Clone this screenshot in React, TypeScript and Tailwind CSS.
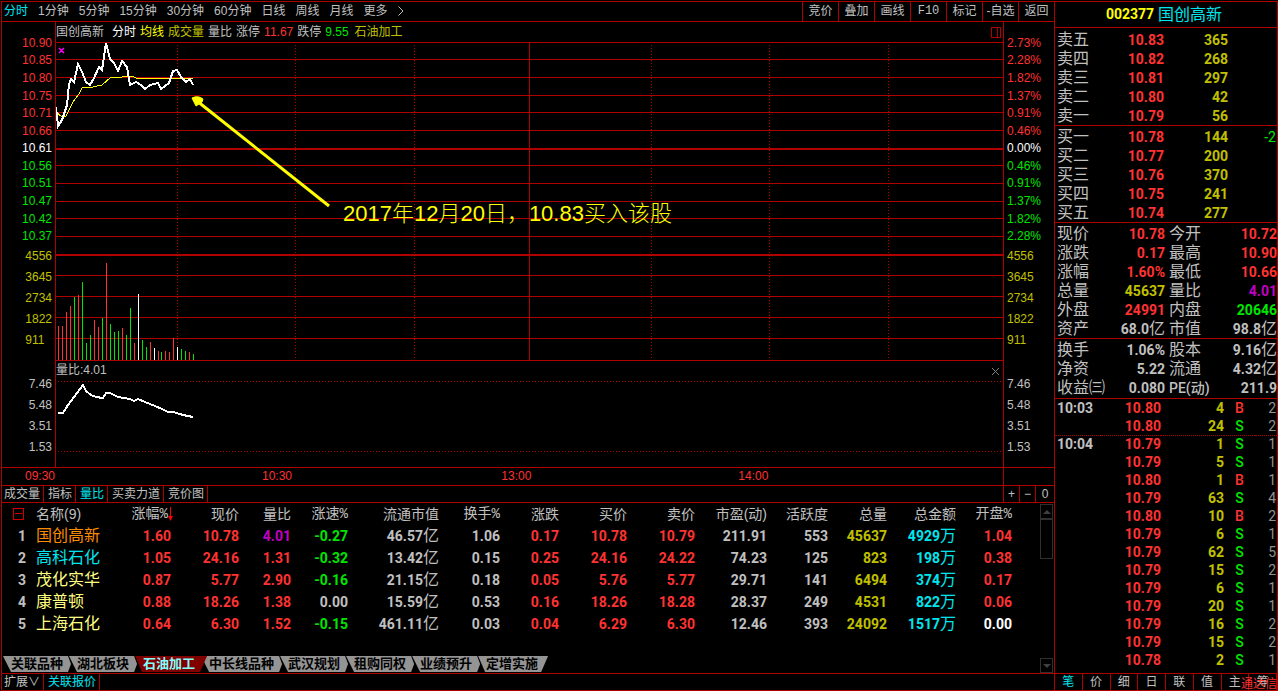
import clsx from 'clsx';

const RED = 'text-[#ff3232]';
const GREEN = 'text-[#00e600]';
const YELLOW = 'text-[#c0c000]';
const GRAY = 'text-[#c0c0c0]';
const CYAN = 'text-[#00e6f0]';
const MAGENTA = 'text-[#c000c0]';
const LINE = 'border-[#b00000]';

const UI = "font-['Liberation_Sans','Noto_Sans_CJK_SC',sans-serif]";
const NUM = "font-[Roboto,'Noto_Sans_CJK_SC',sans-serif] font-bold";
const HEAD = "font-['Liberation_Mono','Noto_Sans_CJK_SC',monospace]";
const CJK = "font-[Roboto,'Noto_Sans_CJK_SC',sans-serif] font-normal text-[16px]";

const periods = ['分时', '1分钟', '5分钟', '15分钟', '30分钟', '60分钟', '日线', '周线', '月线', '更多'];
const tools = ['竞价', '叠加', '画线', 'F10', '标记', '-自选', '返回'];

const priceAxis = ['10.90', '10.85', '10.80', '10.75', '10.71', '10.66', '10.61', '10.56', '10.51', '10.47', '10.42', '10.37'];
const percentAxis = ['2.73%', '2.28%', '1.82%', '1.37%', '0.91%', '0.46%', '0.00%', '0.46%', '0.91%', '1.37%', '1.82%', '2.28%'];
const volumeAxis = ['4556', '3645', '2734', '1822', '911'];
const ratioAxis = ['7.46', '5.48', '3.51', '1.53'];

const thinLines = [0, 17, 35, 53, 70, 88, 123, 141, 159, 176, 194, 233, 254, 275, 296, 318];
const boldLines = [107, 213];
const dottedColumns = [121, 239, 358, 595, 713, 832];

const pricePoints =
  '0,65 2,84 6,78 11,63 13,42 15,37 18,40 22,22 26,30 30,40 34,43 38,36 43,25 46,28 50,1 54,17 58,21 62,29 66,19 71,25 74,43 80,40 85,43 89,47 94,43 102,41 105,47 113,41 117,29 121,28 125,35 130,40 134,37 137,43';
const averagePoints = '1,71 5,74 10,74 17,60 23,52 26,46 37,45 46,43 54,36 66,35 76,34 80,36 137,36';
const ratioPoints =
  '2,52 7,52 12,44 27,24 30,30 35,34 40,36 47,37 50,32 54,32 62,36 74,38 78,40 82,38 89,41 99,45 106,48 112,51 117,51 127,54 137,56';

const volumes = [
  34, 34, 48, 54, 63, 65, 78, 17, 25, 40, 33, 42, 97, 36, 28, 29, 32, 25, 52, 17, 66, 20, 13, 18, 12, 9, 8, 9, 8, 22, 13,
  11, 9, 8, 6,
];
const volumeColors = 'rrrrgrgggrrgrgggrggrwggrwrgrrrwggrg';
const barColor: Record<string, string> = { r: '#ff3232', g: '#00e600', w: '#ffffff' };

const indicatorTabs = ['成交量', '指标', '量比', '买卖力道', '竞价图'];
const boardTabs = ['关联品种', '湖北板块', '石油加工', '中长线品种', '武汉规划', '租购同权', '业绩预升', '定增实施'];

const columns = [
  { label: '涨幅%', width: 'w-[68px]', sorted: true },
  { label: '现价', width: 'w-[68px]' },
  { label: '量比', width: 'w-[52px]' },
  { label: '涨速%', width: 'w-[57px]' },
  { label: '流通市值', width: 'w-[91px]' },
  { label: '换手%', width: 'w-[61px]' },
  { label: '涨跌', width: 'w-[59px]' },
  { label: '买价', width: 'w-[68px]' },
  { label: '卖价', width: 'w-[68px]' },
  { label: '市盈(动)', width: 'w-[72px]' },
  { label: '活跃度', width: 'w-[61px]' },
  { label: '总量', width: 'w-[59px]' },
  { label: '总金额', width: 'w-[69px]' },
  { label: '开盘%', width: 'w-[56px]' },
];
const columnColors = [RED, RED, RED, GREEN, GRAY, GRAY, RED, RED, RED, GRAY, GRAY, YELLOW, CYAN, RED];

const stocks = [
  { name: '国创高新', color: 'text-[#ff8c00]', cells: ['1.60', '10.78', '4.01', '-0.27', '46.57亿', '1.06', '0.17', '10.78', '10.79', '211.91', '553', '45637', '4929万', '1.04'] },
  { name: '高科石化', color: 'text-[#00e6f0]', cells: ['1.05', '24.16', '1.31', '-0.32', '13.42亿', '0.15', '0.25', '24.16', '24.22', '74.23', '125', '823', '198万', '0.38'] },
  { name: '茂化实华', color: 'text-[#ffff80]', cells: ['0.87', '5.77', '2.90', '-0.16', '21.15亿', '0.18', '0.05', '5.76', '5.77', '29.71', '141', '6494', '374万', '0.17'] },
  { name: '康普顿', color: 'text-[#ffff80]', cells: ['0.88', '18.26', '1.38', '0.00', '15.59亿', '0.53', '0.16', '18.26', '18.28', '28.37', '249', '4531', '822万', '0.06'] },
  { name: '上海石化', color: 'text-[#ffff80]', cells: ['0.64', '6.30', '1.52', '-0.15', '461.11亿', '0.03', '0.04', '6.29', '6.30', '12.46', '393', '24092', '1517万', '0.00'] },
];

const asks = [['卖五', '10.83', '365'], ['卖四', '10.82', '268'], ['卖三', '10.81', '297'], ['卖二', '10.80', '42'], ['卖一', '10.79', '56']];
const bids = [['买一', '10.78', '144', '-2'], ['买二', '10.77', '200'], ['买三', '10.76', '370'], ['买四', '10.75', '241'], ['买五', '10.74', '277']];

const stats = [
  ['现价', '10.78', RED, '今开', '10.72', RED],
  ['涨跌', '0.17', RED, '最高', '10.90', RED],
  ['涨幅', '1.60%', RED, '最低', '10.66', RED],
  ['总量', '45637', YELLOW, '量比', '4.01', MAGENTA],
  ['外盘', '24991', RED, '内盘', '20646', GREEN],
  ['资产', '68.0亿', GRAY, '市值', '98.8亿', GRAY],
];
const fundamentals = [
  ['换手', '1.06%', GRAY, '股本', '9.16亿', GRAY],
  ['净资', '5.22', GRAY, '流通', '4.32亿', GRAY],
  ['收益㈢', '0.080', GRAY, 'PE(动)', '211.9', GRAY],
];

const ticks = [
  ['10:03', '10.80', '4', 'B', '2'],
  ['', '10.80', '24', 'S', '2'],
  ['10:04', '10.79', '1', 'S', '1'],
  ['', '10.79', '5', 'S', '1'],
  ['', '10.80', '1', 'B', '1'],
  ['', '10.79', '63', 'S', '4'],
  ['', '10.80', '10', 'B', '2'],
  ['', '10.79', '6', 'S', '1'],
  ['', '10.79', '62', 'S', '5'],
  ['', '10.79', '15', 'S', '2'],
  ['', '10.79', '6', 'S', '1'],
  ['', '10.79', '20', 'S', '1'],
  ['', '10.79', '16', 'S', '2'],
  ['', '10.79', '15', 'S', '2'],
  ['', '10.78', '2', 'S', '1'],
];
const sideTabs = ['笔', '价', '细', '日', '联', '值', '主', '筹'];

// Splits a trailing unit (亿 / 万) off the number so it can be set in the lighter face.
function Amount({ value }: { value: string }) {
  const unit = /[亿万]$/.test(value) ? value.slice(-1) : '';
  return (
    <>
      {unit ? value.slice(0, -1) : value}
      {unit && <span className={clsx('leading-none', CJK)}>{unit}</span>}
    </>
  );
}

function axisColor(i: number) {
  if (i === 6) return 'text-white';
  return i < 6 ? RED : GREEN;
}

function Axis({ side }: { side: 'left' | 'right' }) {
  const left = side === 'left';
  const labels = left ? priceAxis : percentAxis;
  return (
    <div
      className={clsx(
        'flex shrink-0 flex-col pt-[12px] text-[12px] leading-none',
        LINE,
        left ? 'w-[54px] items-end border-r pr-[3px]' : 'w-[51px] items-start border-l pl-[3px]',
      )}
    >
      <div className="flex h-[211px] flex-col">
        {labels.map((label, i) => (
          <span key={i} className={clsx('flex flex-1 items-center', axisColor(i))}>{label}</span>
        ))}
      </div>
      <div className={clsx('flex h-[106px] flex-col', YELLOW)}>
        {volumeAxis.map((label) => (
          <span key={label} className="flex flex-1 items-center">{label}</span>
        ))}
      </div>
      <div className={clsx('mt-[22px] flex flex-col', GRAY)}>
        {ratioAxis.map((label) => (
          <span key={label} className="flex h-[21px] items-center">{label}</span>
        ))}
      </div>
    </div>
  );
}

function PriceChart() {
  return (
    <div className="relative">
      <svg viewBox="0 0 947 319" preserveAspectRatio="none" className="block h-[319px] w-full" fill="none">
        <g stroke="#b00000" shapeRendering="crispEdges">
          {thinLines.map((y) => (
            <line key={y} x1="0" x2="947" y1={y + 0.5} y2={y + 0.5} />
          ))}
          {boldLines.map((y) => (
            <line key={y} x1="0" x2="947" y1={y} y2={y} strokeWidth="2" />
          ))}
          {dottedColumns.map((x) => (
            <line key={x} x1={x + 0.5} x2={x + 0.5} y1="3" y2="318" strokeDasharray="1 2" />
          ))}
          <line x1="473.5" x2="473.5" y1="0" y2="318" />
        </g>
        <g shapeRendering="crispEdges">
          {volumes.map((v, i) => (
            <rect key={i} x={Math.round(2 + i * 3.98)} y={318 - v} width="1" height={v} fill={barColor[volumeColors[i]]} />
          ))}
        </g>
        <polyline points={averagePoints} stroke="#ffff00" shapeRendering="crispEdges" />
        <polyline points={pricePoints} stroke="#ffffff" strokeWidth="2" shapeRendering="crispEdges" />
        <path d="M3 6l5 5M8 6l-5 5M4 8.500h3" stroke="#ff00ff" strokeWidth="1.500" />
      </svg>
      <svg viewBox="0 0 140 112" className="absolute top-[54px] left-[135px] h-[112px] w-[140px]">
        <path d="M6 5L138 110" stroke="#ffff00" strokeWidth="3" />
        <path d="M1 2Q7 -1 12 3L11 6L5 10Q3 6 1 2Z" fill="#ffff00" stroke="#ffff00" />
      </svg>
      <p className="absolute top-[160px] left-[287px] text-[22px] leading-6 font-light whitespace-nowrap text-[#ffff00]">
        2017年12月20日，10.83买入该股
      </p>
    </div>
  );
}

function RatioChart() {
  return (
    <div className="relative">
      <svg viewBox="0 0 947 106" preserveAspectRatio="none" className="block h-[106px] w-full" fill="none">
        <g stroke="#b00000" strokeDasharray="1 2" shapeRendering="crispEdges">
          <line x1="2" x2="946" y1="20.500" y2="20.500" />
          <line x1="2" x2="946" y1="90.500" y2="90.500" />
        </g>
        <polyline points={ratioPoints} stroke="#ffffff" strokeWidth="2" shapeRendering="crispEdges" />
      </svg>
      <span className={clsx('absolute top-px left-0 text-[12px] leading-4', GRAY)}>量比:4.01</span>
      <button aria-label="关闭" className="absolute top-[7px] right-1">
        <svg viewBox="0 0 7 7" className="h-[7px] w-[7px]" stroke="#808080">
          <path d="M0 0l7 7M7 0l-7 7" />
        </svg>
      </button>
    </div>
  );
}

function StockTable() {
  return (
    <table className="w-full table-fixed border-collapse">
      <colgroup>
        <col className="w-[24px]" />
        <col className="w-[77px]" />
        {columns.map((c) => (
          <col key={c.label} className={c.width} />
        ))}
        <col />
      </colgroup>
      <thead>
        <tr className={clsx('h-[22px] text-[14px] leading-none', GRAY)}>
          <th className="p-0">
            <svg viewBox="0 0 11 12" className="mr-0.5 ml-auto h-[12px] w-[11px]" fill="none" stroke="#d00000" shapeRendering="crispEdges">
              <path d="M0.500 0.500h10v11h-10zM2 5.500h7" />
            </svg>
          </th>
          <th className="p-0 pl-2.5 text-left font-normal whitespace-nowrap">名称(9)</th>
          {columns.map((c) => (
            <th
              key={c.label}
              className={clsx('p-0 text-right font-normal whitespace-nowrap', c.label.endsWith('%') && HEAD)}
            >
              {c.label}
              {c.sorted && (
                <svg viewBox="0 0 5 14" className="-mr-0.5 inline h-[14px] w-[5px]" fill="#ff0000">
                  <path d="M2 0h1v9h2l-2.500 5L0 9h2z" />
                </svg>
              )}
            </th>
          ))}
          <th className="p-0" />
        </tr>
      </thead>
      <tbody className={clsx('text-[14px] leading-none', NUM)}>
        {stocks.map((s, row) => (
          <tr key={s.name} className="h-[22px]">
            <td className={clsx('p-0 text-right', GRAY)}>{row + 1}</td>
            <td className={clsx('p-0 pl-2.5 whitespace-nowrap', CJK, s.color)}>{s.name}</td>
            {s.cells.map((cell, i) => (
              <td
                key={i}
                className={clsx(
                  'p-0 text-right whitespace-nowrap',
                  cell === '4.01' ? MAGENTA : cell === '0.00' ? (i === 13 ? 'text-white' : GRAY) : columnColors[i],
                )}
              >
                <Amount value={cell} />
              </td>
            ))}
            <td className="p-0" />
          </tr>
        ))}
      </tbody>
    </table>
  );
}

function ScrollBar() {
  return (
    <div className="mt-px flex w-[13px] shrink-0 flex-col">
      <button aria-label="向上" className="flex h-[15px] items-center justify-center border border-[#303030]">
        <svg viewBox="0 0 8 4" className="h-1 w-2" fill="#404040"><path d="M0 4L4 0L8 4Z" /></svg>
      </button>
      <div className="h-[40px] border border-[#303030]" />
      <button aria-label="向下" className="mt-auto flex h-[15px] items-center justify-center border border-[#303030]">
        <svg viewBox="0 0 8 4" className="h-1 w-2" fill="#404040"><path d="M0 0L4 4L8 0Z" /></svg>
      </button>
    </div>
  );
}

function BoardTabs() {
  return (
    <nav className="flex pl-px text-[13px] leading-4 font-bold">
      {boardTabs.map((tab, i) => {
        const active = tab === '石油加工';
        const last = i === boardTabs.length - 1;
        return (
          <button
            key={tab}
            className={clsx(
              'relative h-[16px] whitespace-nowrap',
              active && 'z-10 -mr-1.5 bg-[#800000] pr-3 pl-2 text-[#80ffff]',
              !active && 'bg-[#949494] pl-2 text-black',
              active || last
                ? '[clip-path:polygon(0_0,100%_0,calc(100%_-_7px)_100%,7px_100%)]'
                : '[clip-path:polygon(0_0,calc(100%_-_3px)_0,100%_50%,calc(100%_-_3px)_100%,8px_100%)]',
              !active && (last ? 'pr-2.5' : '-mr-0.5 pr-2'),
            )}
          >
            {tab}
          </button>
        );
      })}
    </nav>
  );
}

function Book({ rows }: { rows: string[][] }) {
  return (
    <table className="w-full table-fixed border-collapse">
      <tbody className={clsx('text-[14px] leading-none', NUM)}>
        {rows.map(([label, price, volume, change]) => (
          <tr key={label} className="h-[19px]">
            <th className={clsx('w-[50px] p-0 pl-0.5 text-left', CJK, GRAY)}>{label}</th>
            <td className={clsx('w-[59px] p-0 text-right', RED)}>{price}</td>
            <td className={clsx('w-[64px] p-0 text-right', YELLOW)}>{volume}</td>
            <td className={clsx('p-0 pr-px text-right font-normal', GREEN)}>{change}</td>
          </tr>
        ))}
      </tbody>
    </table>
  );
}

function Stats({ rows }: { rows: string[][] }) {
  return (
    <table className="w-full table-fixed border-collapse">
      <tbody className={clsx('text-[14px] leading-none whitespace-nowrap', NUM)}>
        {rows.map(([a, av, ac, b, bv, bc]) => (
          <tr key={a} className="h-[19px]">
            <th className={clsx('w-[52px] p-0 pl-0.5 text-left', CJK, GRAY)}>{a}</th>
            <td className={clsx('w-[58px] p-0 text-right', ac)}><Amount value={av} /></td>
            <th className={clsx('w-[50px] p-0 pl-1 text-left', b === 'PE(动)' ? 'text-[14px] font-medium' : CJK, GRAY)}>{b}</th>
            <td className={clsx('p-0 text-right', bc)}><Amount value={bv} /></td>
          </tr>
        ))}
      </tbody>
    </table>
  );
}

function Ticks() {
  return (
    <table className="w-full table-fixed border-collapse">
      <tbody className={clsx('text-[14px] leading-none', NUM)}>
        {ticks.map(([time, price, volume, dir, count], i) => (
          <tr key={i} className={clsx('h-[18px]', i === 2 && 'border-t border-dotted border-[#b00000]')}>
            <td className={clsx('w-[46px] p-0 pl-0.5', GRAY)}>{time}</td>
            <td className={clsx('w-[60px] p-0 text-right', RED)}>{price}</td>
            <td className={clsx('w-[63px] p-0 text-right', YELLOW)}>{volume}</td>
            <td className={clsx('w-[31px] p-0 text-center font-medium', dir === 'B' ? RED : GREEN)}>{dir}</td>
            <td className="p-0 pr-px text-right font-normal text-[#909090]">{count}</td>
          </tr>
        ))}
      </tbody>
    </table>
  );
}

export default function App() {
  return (
    <div className={clsx('flex min-h-screen bg-black pt-px pl-px', UI)}>
      <div className={clsx('flex min-w-0 flex-1 border', LINE)}>
        <main className="flex min-w-0 flex-1 flex-col">
          <header className={clsx('flex h-[20px] items-stretch justify-between border-b text-[12px] leading-none whitespace-nowrap', LINE, GRAY)}>
            <nav className="flex items-center gap-[10px] pb-0.5 pl-0.5">
              {periods.map((p, i) => (
                <button key={p} className={clsx(i === 0 && CYAN)}>{p}</button>
              ))}
              <svg viewBox="0 0 6 10" className="h-[10px] w-[6px]" fill="none" stroke="#c0c0c0"><path d="M0.500 0.500L5 5L0.500 9.500" /></svg>
            </nav>
            <div className="flex">
              {tools.map((t) => (
                <button key={t} className={clsx('w-[36px] border-l pb-0.5', LINE, t === 'F10' && HEAD)}>{t}</button>
              ))}
            </div>
          </header>

          <section className="flex">
            <Axis side="left" />
            <div className="min-w-0 flex-1">
              <div className="flex h-[20px] items-center gap-1 pr-0.5 text-[12px] leading-none whitespace-nowrap">
                <span className={clsx('mr-1', GRAY)}>国创高新</span>
                <span className="text-white">分时</span>
                <span className="text-[#ffff00]">均线</span>
                <span className={YELLOW}>成交量</span>
                <span className={GRAY}>量比</span>
                <span className={GRAY}>涨停</span>
                <span className={RED}>11.67</span>
                <span className={GRAY}>跌停</span>
                <span className={GREEN}>9.55</span>
                <span className={clsx('pl-0.5', YELLOW)}>石油加工</span>
                <button aria-label="侧栏" className="ml-auto">
                  <svg viewBox="0 0 10 11" className="h-[11px] w-[10px]" fill="none" stroke="#b00000" shapeRendering="crispEdges">
                    <path d="M0.500 0.500h9v10h-9zM6.500 0v11" />
                  </svg>
                </button>
              </div>
              <PriceChart />
              <RatioChart />
            </div>
            <Axis side="right" />
          </section>

          <div className={clsx('flex h-[18px] border-t text-right text-[12px] leading-4', LINE, RED)}>
            <span className="w-[53px]">09:30</span>
            <div className="grid flex-1 grid-cols-[100fr_101fr_100fr_99fr]">
              <span>10:30</span>
              <span>13:00</span>
              <span>14:00</span>
            </div>
            <span className={clsx('w-[51px] border-l', LINE)} />
          </div>

          <div className={clsx('flex h-[17px] items-stretch justify-between border-t text-[12px] leading-none', LINE, GRAY)}>
            <nav className="flex">
              {indicatorTabs.map((t) => (
                <button key={t} className={clsx('border-r pr-[3px] pl-1 first:pl-0.5', LINE, t === '量比' && CYAN)}>{t}</button>
              ))}
            </nav>
            <div className="flex">
              <button className={clsx('w-[16px] border-l', LINE)}>+</button>
              <button className={clsx('w-[16px] border-l', LINE)}>−</button>
              <button className={clsx('w-[19px] border-l', LINE)}>0</button>
            </div>
          </div>

          <section className={clsx('flex flex-1 border-t pr-px', LINE)}>
            <div className="flex min-w-0 flex-1 flex-col justify-between pb-px">
              <StockTable />
              <BoardTabs />
            </div>
            <ScrollBar />
          </section>

          <footer className={clsx('flex h-[17px] border-t text-[12px] leading-none', LINE, GRAY)}>
            <button className={clsx('w-[42px] border-r pl-0.5 text-left', LINE)}>扩展∨</button>
            <button className={clsx('border-r pr-[3px] pl-1', LINE, CYAN)}>关联报价</button>
          </footer>
        </main>

        <aside className={clsx('flex w-[223px] shrink-0 flex-col border-l', LINE)}>
          <h1 className={clsx('flex h-[26px] items-center justify-center gap-1 border-b pr-1 text-[14px]', LINE, NUM)}>
            <span className="text-[#ffff00]">002377</span>
            <span className={clsx('leading-none', CJK, CYAN)}>国创高新</span>
          </h1>
          <div className={clsx('border-b pt-0.5', LINE)}><Book rows={asks} /></div>
          <div className={clsx('border-b pt-px', LINE)}><Book rows={bids} /></div>
          <div className={clsx('border-b pt-px', LINE)}><Stats rows={stats} /></div>
          <div className={clsx('border-b py-px', LINE)}><Stats rows={fundamentals} /></div>
          <div className="flex-1"><Ticks /></div>
          <nav className={clsx('relative flex h-[17px] border-t text-[12px] leading-none', LINE, GRAY)}>
            {sideTabs.map((t, i) => (
              <button key={t} className={clsx('flex-1 border-r last:border-r-0', LINE, i === 0 && CYAN)}>{t}</button>
            ))}
            <span className={clsx('absolute right-0 bottom-0', RED)}>通达信</span>
          </nav>
        </aside>
      </div>
    </div>
  );
}
